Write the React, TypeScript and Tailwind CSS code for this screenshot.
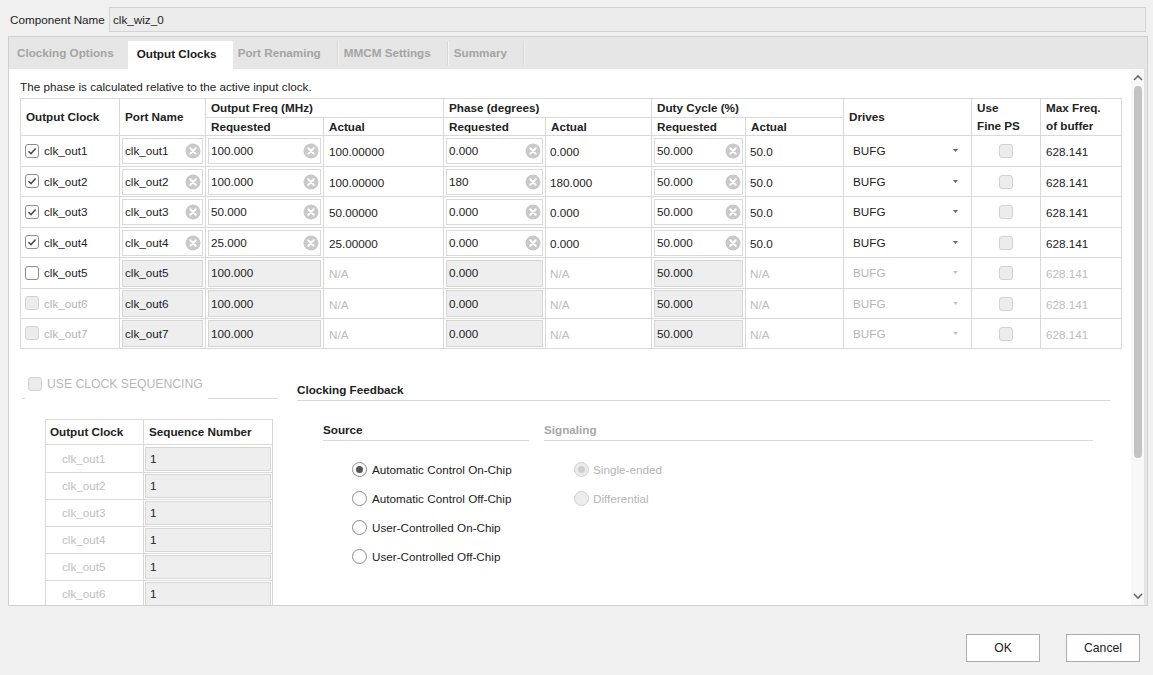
import React from 'react';

type Row = {
  n: string;
  en: boolean;
  chk: 'checked' | 'unchecked' | 'disabled';
  freq: string;
  freqA: string;
  ph: string;
  phA: string;
  duty: string;
  dutyA: string;
  tall: boolean;
};

const rows: Row[] = [
  { n: 'clk_out1', en: true, chk: 'checked', freq: '100.000', freqA: '100.00000', ph: '0.000', phA: '0.000', duty: '50.000', dutyA: '50.0', tall: true },
  { n: 'clk_out2', en: true, chk: 'checked', freq: '100.000', freqA: '100.00000', ph: '180', phA: '180.000', duty: '50.000', dutyA: '50.0', tall: false },
  { n: 'clk_out3', en: true, chk: 'checked', freq: '50.000', freqA: '50.00000', ph: '0.000', phA: '0.000', duty: '50.000', dutyA: '50.0', tall: true },
  { n: 'clk_out4', en: true, chk: 'checked', freq: '25.000', freqA: '25.00000', ph: '0.000', phA: '0.000', duty: '50.000', dutyA: '50.0', tall: false },
  { n: 'clk_out5', en: false, chk: 'unchecked', freq: '100.000', freqA: 'N/A', ph: '0.000', phA: 'N/A', duty: '50.000', dutyA: 'N/A', tall: true },
  { n: 'clk_out6', en: false, chk: 'disabled', freq: '100.000', freqA: 'N/A', ph: '0.000', phA: 'N/A', duty: '50.000', dutyA: 'N/A', tall: false },
  { n: 'clk_out7', en: false, chk: 'disabled', freq: '100.000', freqA: 'N/A', ph: '0.000', phA: 'N/A', duty: '50.000', dutyA: 'N/A', tall: false },
];

function ClearIcon() {
  return (
    <svg width="16" height="16" viewBox="0 0 16 16" className="shrink-0">
      <circle cx="8" cy="8" r="7.5" fill="#c9c9c9" />
      <path d="M5.3 5.3 L10.7 10.7 M10.7 5.3 L5.3 10.7" stroke="#fff" strokeWidth="2" strokeLinecap="round" />
    </svg>
  );
}

function Check({ state }: { state: 'checked' | 'unchecked' | 'disabled' }) {
  if (state === 'disabled') {
    return <div className="w-[14px] h-[14px] rounded-[3px] border border-[#d2d2d2] bg-[#ececec] shrink-0" />;
  }
  return (
    <div className="w-[14px] h-[14px] rounded-[3px] border border-[#8c8c8c] bg-white shrink-0 flex items-center justify-center">
      {state === 'checked' && (
        <svg width="10" height="10" viewBox="0 0 10 10">
          <path d="M1.5 5.2 L4 7.6 L8.6 2.4" stroke="#4a4a4a" strokeWidth="1.5" fill="none" />
        </svg>
      )}
    </div>
  );
}

function Radio({ on, disabled }: { on: boolean; disabled?: boolean }) {
  return (
    <div
      className={
        'w-[15px] h-[15px] rounded-full border shrink-0 flex items-center justify-center ' +
        (disabled ? 'border-[#d0d0d0] bg-[#ececec]' : 'border-[#8c8c8c] bg-white')
      }
    >
      {on && <div className={'w-[7px] h-[7px] rounded-full ' + (disabled ? 'bg-[#cfcfcf]' : 'bg-[#555]')} />}
    </div>
  );
}

function Field({ value, en }: { value: string; en: boolean }) {
  if (en) {
    return (
      <div className="h-[26px] mx-[2px] border border-[#dadada] bg-white flex items-center pl-[2px] pr-[1px]">
        <span className="flex-1 whitespace-nowrap">{value}</span>
        <ClearIcon />
      </div>
    );
  }
  return (
    <div className="h-[27px] mx-[2px] border border-[#d6d6d6] bg-[#eeeeee] flex items-center pl-[2px] whitespace-nowrap">
      {value}
    </div>
  );
}

function Chevron({ up }: { up: boolean }) {
  return (
    <svg width="12" height="8" viewBox="0 0 12 8">
      <path d={up ? 'M2 6 L6 2 L10 6' : 'M2 2 L6 6 L10 2'} stroke="#6a6a6a" strokeWidth="1.6" fill="none" />
    </svg>
  );
}

const td = 'border border-[#d9d9d9] p-0 align-middle';
const th = 'border border-[#d9d9d9] px-[5px] py-0 text-left font-bold align-middle leading-[16px]';

export default function App() {
  return (
    <div className="w-[1153px] h-[675px] bg-[#f0f0f0] flex flex-col font-['Liberation_Sans',Arial,sans-serif] text-[11.7px] text-[#222] overflow-hidden">
      {/* Component name */}
      <div className="flex items-center h-[25px] mt-[7px] pl-[10px] pr-[7px]">
        <span className="w-[99px] whitespace-nowrap">Component Name</span>
        <div className="flex-1 h-full border border-[#d3d3d3] bg-[#ececec] flex items-center pl-[3px]">clk_wiz_0</div>
      </div>

      {/* Main panel */}
      <div className="ml-[8px] mt-[4px] w-[1140px] h-[570px] border border-[#d0d0d0] flex flex-col">
        {/* Tabs */}
        <div className="h-[32px] bg-[#e6e6e6] flex items-stretch shrink-0">
          <div className="pl-[8px] pr-[14px] flex items-center font-bold text-[#a4a4a4]">Clocking Options</div>
          <div className="mt-[4px] pb-[3px] bg-white pl-[9px] pr-[16px] flex items-center font-bold text-[#1a1a1a]">Output Clocks</div>
          <div className="pl-[5px] pr-[16px] flex items-center font-bold text-[#a4a4a4]">Port Renaming</div>
          <div className="w-[2px] my-[4px] bg-[#d6d6d6] border-r border-[#f4f4f4]" />
          <div className="pl-[5px] pr-[16px] flex items-center font-bold text-[#a4a4a4]">MMCM Settings</div>
          <div className="w-[2px] my-[4px] bg-[#d6d6d6] border-r border-[#f4f4f4]" />
          <div className="pl-[5px] pr-[16px] flex items-center font-bold text-[#a4a4a4]">Summary</div>
          <div className="w-[2px] my-[4px] bg-[#d6d6d6] border-r border-[#f4f4f4]" />
        </div>

        {/* Content */}
        <div className="flex-1 flex bg-white overflow-hidden">
          <div className="flex-1 overflow-hidden pl-[11px] pt-[11px]">
            <div className="h-[14px] leading-[14px] whitespace-nowrap">The phase is calculated relative to the active input clock.</div>

            <table className="mt-[4px] table-fixed border-collapse w-[1101px]">
              <colgroup>
                <col className="w-[99px]" />
                <col className="w-[86px]" />
                <col className="w-[118px]" />
                <col className="w-[120px]" />
                <col className="w-[102px]" />
                <col className="w-[106px]" />
                <col className="w-[94px]" />
                <col className="w-[98px]" />
                <col className="w-[128px]" />
                <col className="w-[69px]" />
                <col className="w-[81px]" />
              </colgroup>
              <thead>
                <tr className="h-[18px]">
                  <th rowSpan={2} className={th}>Output Clock</th>
                  <th rowSpan={2} className={th}>Port Name</th>
                  <th colSpan={2} className={th}>Output Freq (MHz)</th>
                  <th colSpan={2} className={th}>Phase (degrees)</th>
                  <th colSpan={2} className={th}>Duty Cycle (%)</th>
                  <th rowSpan={2} className={th}>Drives</th>
                  <th rowSpan={2} className={th + ' !leading-[18px]'}>Use<br />Fine PS</th>
                  <th rowSpan={2} className={th + ' !leading-[18px]'}>Max Freq.<br />of buffer</th>
                </tr>
                <tr className="h-[17px]">
                  <th className={th}>Requested</th>
                  <th className={th}>Actual</th>
                  <th className={th}>Requested</th>
                  <th className={th}>Actual</th>
                  <th className={th}>Requested</th>
                  <th className={th}>Actual</th>
                </tr>
              </thead>
              <tbody>
                {rows.map((r) => {
                  const dim = r.chk === 'disabled';
                  const na = 'text-[#bdbdbd]';
                  return (
                    <tr key={r.n} className={r.tall ? 'h-[31px]' : 'h-[30px]'}>
                      <td className={td}>
                        <div className="flex items-center pl-[4px] gap-[5px]">
                          <Check state={r.chk} />
                          <span className={dim ? 'text-[#b5b5b5]' : ''}>{r.n}</span>
                        </div>
                      </td>
                      <td className={td}><Field value={r.n} en={r.en} /></td>
                      <td className={td}><Field value={r.freq} en={r.en} /></td>
                      <td className={td + ' px-[5px] pt-[2px] ' + (r.en ? '' : na)}>{r.freqA}</td>
                      <td className={td}><Field value={r.ph} en={r.en} /></td>
                      <td className={td + ' px-[4px] pt-[2px] ' + (r.en ? '' : na)}>{r.phA}</td>
                      <td className={td}><Field value={r.duty} en={r.en} /></td>
                      <td className={td + ' px-[4px] pt-[2px] ' + (r.en ? '' : na)}>{r.dutyA}</td>
                      <td className={td}>
                        <div className={'flex items-center justify-between pl-[9px] pr-[13px] ' + (r.en ? '' : 'text-[#b5b5b5]')}>
                          <span>BUFG</span>
                          <svg width="5" height="3" viewBox="0 0 5 3">
                            <path d="M0 0 L5 0 L2.5 3 Z" fill={r.en ? '#666' : '#c4c4c4'} />
                          </svg>
                        </div>
                      </td>
                      <td className={td}>
                        <div className="flex justify-center">
                          <Check state="disabled" />
                        </div>
                      </td>
                      <td className={td + ' px-[5px] pt-[2px] ' + (r.en ? '' : na)}>628.141</td>
                    </tr>
                  );
                })}
              </tbody>
            </table>

            {/* Bottom section */}
            <div className="flex mt-[24px]">
              {/* Clock sequencing */}
              <div className="ml-[2px] w-[258px] flex flex-col shrink-0">
                <div className="h-[22px] flex items-center pl-[6px] gap-[5px]">
                  <Check state="disabled" />
                  <span className="text-[#b8b8b8] text-[12.2px] whitespace-nowrap">USE CLOCK SEQUENCING</span>
                </div>
                <div className="mt-[3px] h-px flex">
                  <div className="w-[3px] h-px bg-[#d8d8d8]" />
                  <div className="w-[183px]" />
                  <div className="w-[70px] h-px bg-[#d8d8d8]" />
                </div>
                <table className="ml-[23px] mt-[20px] table-fixed border-collapse w-[227px]">
                  <colgroup>
                    <col className="w-[98px]" />
                    <col className="w-[129px]" />
                  </colgroup>
                  <thead>
                    <tr className="h-[25px]">
                      <th className="border border-[#d9d9d9] px-[4px] text-left font-bold">Output Clock</th>
                      <th className="border border-[#d9d9d9] px-[5px] text-left font-bold">Sequence Number</th>
                    </tr>
                  </thead>
                  <tbody>
                    {['clk_out1', 'clk_out2', 'clk_out3', 'clk_out4', 'clk_out5', 'clk_out6'].map((c, i) => (
                      <tr key={c} className={i === 0 ? 'h-[28px]' : 'h-[27px]'}>
                        <td className="border border-[#d9d9d9] pl-[16px] text-[#c0c0c0] align-middle">{c}</td>
                        <td className="border border-[#d9d9d9] p-0 align-middle">
                          <div className="h-[24px] mx-[1px] border border-[#d6d6d6] bg-[#eeeeee] flex items-center pl-[4px]">1</div>
                        </td>
                      </tr>
                    ))}
                  </tbody>
                </table>
              </div>

              {/* Clocking feedback */}
              <div className="ml-[17px] w-[813px] flex flex-col">
                <div className="pt-[10px] h-[24px] leading-[14px] font-bold">Clocking Feedback</div>
                <div className="mt-[3px] h-px bg-[#d8d8d8]" />
                <div className="flex ml-[26px] mt-[22px]">
                  <div className="w-[206px] flex flex-col">
                    <div className="h-[14px] leading-[14px] font-bold">Source</div>
                    <div className="mt-[3px] h-px bg-[#d8d8d8]" />
                    <div className="mt-[14px] pl-[29px] flex flex-col">
                      {['Automatic Control On-Chip', 'Automatic Control Off-Chip', 'User-Controlled On-Chip', 'User-Controlled Off-Chip'].map((s, i) => (
                        <div key={s} className="h-[29px] flex items-center gap-[5px] whitespace-nowrap">
                          <Radio on={i === 0} />
                          <span>{s}</span>
                        </div>
                      ))}
                    </div>
                  </div>
                  <div className="ml-[15px] w-[549px] flex flex-col">
                    <div className="h-[14px] leading-[14px] font-bold text-[#a8a8a8]">Signaling</div>
                    <div className="mt-[3px] h-px bg-[#d8d8d8]" />
                    <div className="mt-[14px] pl-[30px] flex flex-col">
                      {['Single-ended', 'Differential'].map((s, i) => (
                        <div key={s} className="h-[29px] flex items-center gap-[4px] whitespace-nowrap text-[#b5b5b5]">
                          <Radio on={i === 0} disabled />
                          <span>{s}</span>
                        </div>
                      ))}
                    </div>
                  </div>
                </div>
              </div>
            </div>
          </div>

          {/* Scrollbar */}
          <div className="w-[16px] flex shrink-0">
            <div className="w-[13px] bg-[#f8f8f8] flex flex-col items-center">
              <div className="h-[16px] flex items-center justify-center mt-[1px]">
                <Chevron up />
              </div>
              <div className="w-[8px] h-[372px] rounded-full bg-[#c3c3c3]" />
              <div className="flex-1" />
              <div className="h-[16px] flex items-center justify-center mb-[1px]">
                <Chevron up={false} />
              </div>
            </div>
            <div className="w-[3px] bg-[#e4e4e4]" />
          </div>
        </div>
      </div>

      {/* Buttons */}
      <div className="flex justify-end gap-[26px] mt-[28px] pr-[13px]">
        <div className="w-[74px] h-[28px] border border-[#adadad] bg-white flex items-center justify-center text-[12.2px]">OK</div>
        <div className="w-[74px] h-[28px] border border-[#adadad] bg-white flex items-center justify-center text-[12.2px]">Cancel</div>
      </div>
    </div>
  );
}
